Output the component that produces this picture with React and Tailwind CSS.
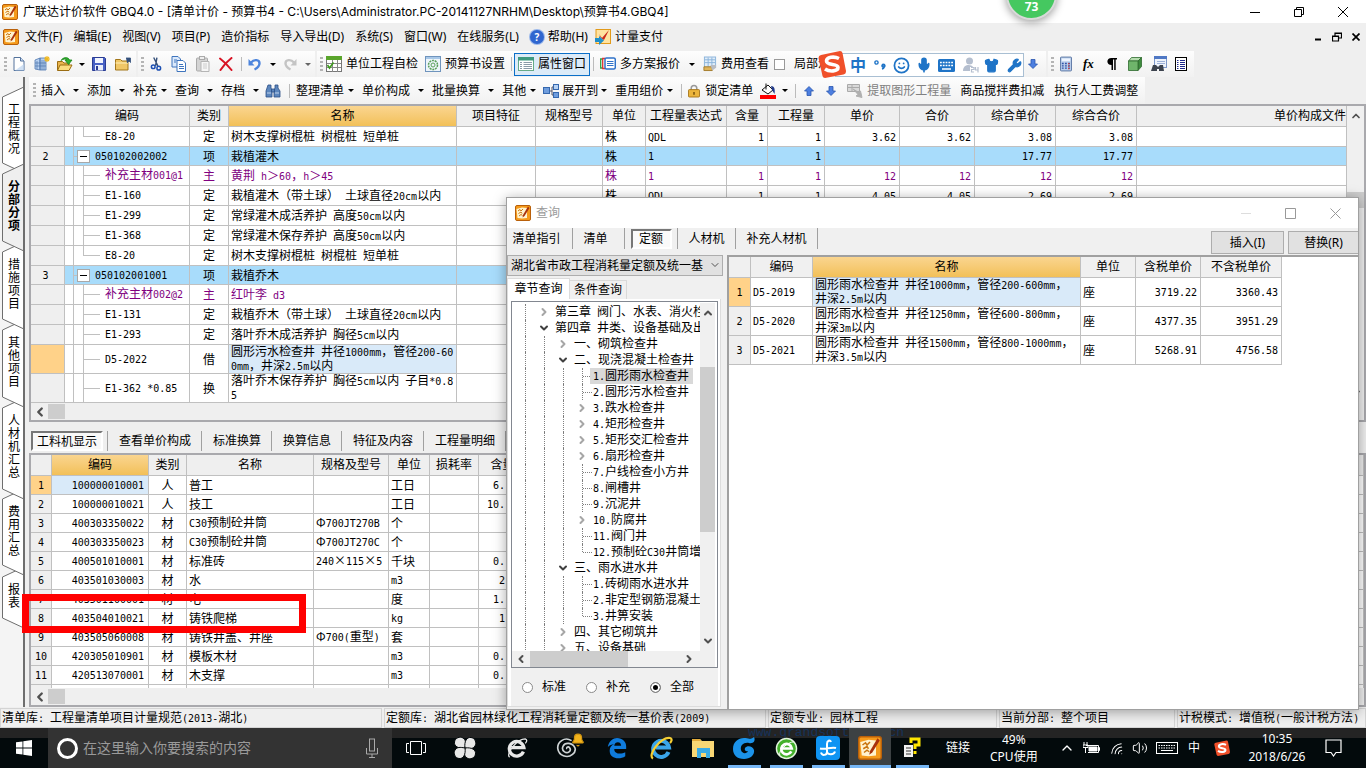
import React, { useState } from "react";
import clsx from "clsx";
import {
  Bell,
  ChevronDown,
  ChevronLeft,
  ChevronRight,
  ChevronUp,
  Mic,
  Minus,
  Shirt,
  Smile,
  Square,
  Volume2,
  Wifi,
  Wrench,
  X,
} from "lucide-react";

/* ---------- text helpers ---------- */

// Latin runs are set in a half-width face so that they line up with the CJK text
const Sun = ({ children }) =>
  String(children)
    .split(/([\x20-\x7e]+)/)
    .map((part, i) =>
      i % 2 ? (
        <span key={i} className="font-['DejaVu_Sans_Mono','Liberation_Mono',monospace] text-[10px]">
          {part}
        </span>
      ) : (
        part
      )
    );

/* ---------- icons ---------- */

const AppIcon = ({ className = "size-4" }) => (
  <svg viewBox="0 0 16 16" className={clsx("shrink-0", className)}>
    <rect x="0.500" y="0.500" width="15" height="15" rx="1.500" fill="#f59a1b" stroke="#b9600a" />
    <path d="M1.500 4L7 2.500l5 .5v10l-5 .5-4.500-.5z" fill="#fff3cf" />
    <path d="M3 6l2-1.500 1 1.500 2-2M3.500 8.500L6 7l1 1.500M4 11l2-1.500 1.500 1" stroke="#c9740f" strokeWidth="1" fill="none" />
    <path d="M13 1.500L8 10l-.5 2.500L9.500 11l5-8z" fill="#a8320d" />
  </svg>
);

const NewIcon = () => (
  <svg viewBox="0 0 14 16" className="h-4 w-3.5 shrink-0">
    <path d="M2 1.500h6.500L12 5v9.500H2z" fill="#fff" stroke="#54739c" />
    <path d="M8.500 1.500V5H12" fill="#cfe0f5" stroke="#54739c" />
    <path d="M3 14.500h9V8z" fill="#bcd3ee" opacity="0.700" />
  </svg>
);

const BuildingIcon = () => (
  <svg viewBox="0 0 16 16" className="size-4 shrink-0">
    <path d="M1 4l5-2v12l-5-1zM6 2h6v12H6z" fill="#b8d1f1" stroke="#4f77ae" strokeWidth="0.800" />
    <path d="M3 5v8M8 4v10M10 4v10M1 7h11M1 10h11" stroke="#4f77ae" strokeWidth="0.700" />
    <path d="M13 0v6M10 3h6M11 1l4 4M15 1l-4 4" stroke="#f0b81e" strokeWidth="1.100" />
  </svg>
);

const OpenIcon = () => (
  <svg viewBox="0 0 16 16" className="size-4 shrink-0">
    <path d="M0.500 14V5.500h5l1.500 1.500h5V14z" fill="#e9b44c" stroke="#9b6d13" />
    <path d="M0.500 14.500L3 9h12l-3 5.500z" fill="#fbdc7e" stroke="#9b6d13" />
    <path d="M4 4.500C6 1 11 .5 12.500 4H15l-3.500 4.500L8 4h2C9 2.500 6 3 4 4.500z" fill="#2fae2f" stroke="#198719" strokeWidth="0.800" />
  </svg>
);

const SaveIcon = () => (
  <svg viewBox="0 0 14 14" className="size-3.5 shrink-0">
    <path d="M0.500 0.500h12l1 1v12h-13z" fill="#4760c4" stroke="#2a3c94" />
    <rect x="3" y="1" width="8" height="5" fill="#f1f4fd" />
    <rect x="3" y="8" width="8" height="5.500" fill="#e9edf9" />
    <rect x="4" y="9" width="2" height="4" fill="#2a3c94" />
  </svg>
);

const FolderIcon = () => (
  <svg viewBox="0 0 16 14" className="h-3.5 w-4 shrink-0">
    <path d="M0.500 13V2.500h5L7 4h6v9z" fill="#f1c766" stroke="#a2761b" />
    <path d="M0.500 6h12.500" stroke="#fff0bb" />
    <path d="M11 1h4.500v4.500L14 4l-2 2" fill="#34507c" stroke="#34507c" strokeWidth="0.800" />
  </svg>
);

const CutIcon = () => (
  <svg viewBox="0 0 13 16" className="h-4 w-3 shrink-0" fill="none">
    <path d="M4 1l4.500 9M7.500 1L6 10" stroke="#36507a" strokeWidth="1.500" />
    <circle cx="3.500" cy="11" r="2" stroke="#1c4fb3" strokeWidth="1.600" />
    <circle cx="9.500" cy="12.500" r="2" stroke="#1c4fb3" strokeWidth="1.600" />
  </svg>
);

const CopyIcon = () => (
  <svg viewBox="0 0 16 16" className="size-4 shrink-0" strokeWidth="1">
    <path d="M1 0.500h6L9.500 3v8H1z" fill="#dbe9fb" stroke="#3e74bd" />
    <path d="M6 4.500h6L14.500 7v8.500H6z" fill="#fff" stroke="#3e74bd" />
    <path d="M8 8.500h4M8 10.500h5M8 12.500h5M3 4h3M3 6h2" stroke="#3e74bd" />
  </svg>
);

const PasteIcon = () => (
  <svg viewBox="0 0 16 16" className="size-4 shrink-0">
    <rect x="1.500" y="2" width="11" height="13" rx="1" fill="#d4d4d4" stroke="#aaa" />
    <rect x="4.500" y="0.500" width="5" height="3" fill="#eee" stroke="#aaa" />
    <path d="M6 5.500h8v10H6z" fill="#f6f6f6" stroke="#b5b5b5" />
    <path d="M8 8h4M8 10h4M8 12h4" stroke="#ccc" />
  </svg>
);

const DeleteIcon = () => (
  <svg viewBox="0 0 14 14" className="size-3.5 shrink-0" fill="none" stroke="#d81324" strokeLinecap="round">
    <path d="M1 1.500c4 3 8 7 11.500 11.500" strokeWidth="2" />
    <path d="M12.500 1C8 4.500 4 9 1.500 13" strokeWidth="2" />
  </svg>
);

const UndoIcon = ({ gray }) => (
  <svg viewBox="0 0 14 14" className={clsx("size-3.5 shrink-0", gray && "-scale-x-100")}>
    <path
      d="M3 5.500c3-3.500 8.500-3 8.500.8 0 3-2 4.700-5 6.200"
      fill="none"
      stroke={gray ? "#c4c4c4" : "#4c84dc"}
      strokeWidth="2.400"
    />
    <path d="M0.500 2v6.500h6z" fill={gray ? "#c4c4c4" : "#4c84dc"} />
  </svg>
);

const CheckTableIcon = () => (
  <svg viewBox="0 0 16 16" className="size-4 shrink-0">
    <rect x="0.500" y="0.500" width="15" height="15" fill="#fff" stroke="#777" />
    <rect x="0" y="0" width="16" height="4" fill="#5aa52c" />
    <path d="M1 7.500h14M1 11.500h14M6.500 4v12M11.500 4v12" stroke="#888" />
    <path d="M1.500 9l2 3 4-5.500" stroke="#3d9a1c" fill="none" strokeWidth="1.600" />
  </svg>
);

const GearWinIcon = () => (
  <svg viewBox="0 0 16 16" className="size-4 shrink-0">
    <rect x="0.500" y="0.500" width="15" height="15" fill="#eef5fb" stroke="#6f94bd" />
    <rect x="1" y="1" width="14" height="2" fill="#a9c8e8" />
    <circle cx="8" cy="9" r="4.500" fill="none" stroke="#5aa05a" strokeWidth="1.500" strokeDasharray="2 0.800" />
    <circle cx="8" cy="9" r="2" fill="none" stroke="#5aa05a" />
  </svg>
);

const ListWinIcon = () => (
  <svg viewBox="0 0 16 14" className="h-3.5 w-4 shrink-0">
    <rect x="0.500" y="0.500" width="15" height="13" fill="#fff" stroke="#6a8" />
    <rect x="0" y="0" width="16" height="3.500" fill="#3f9a80" />
    <path d="M2 5.500h2M2 7.500h2M2 9.500h2M2 11.500h2M5.500 5.500h8.500M5.500 7.500h8.500M5.500 9.500h8.500M5.500 11.500h8.500" stroke="#8a9aa8" />
  </svg>
);

const PlansIcon = () => (
  <svg viewBox="0 0 16 14" className="h-3.5 w-4 shrink-0" fill="#fff">
    <path d="M3 2H0.700v9H3" stroke="#2ea043" strokeWidth="1.300" />
    <path d="M5 1.500H2.700v10H5" stroke="#d33" strokeWidth="1.300" />
    <rect x="5" y="1" width="10.300" height="11" rx="1.500" stroke="#2f72c9" strokeWidth="1.500" />
    <path d="M7 4.500h6.500M7 6.500h6.500M7 8.500h6.500" stroke="#2f72c9" />
  </svg>
);

const FeeIcon = () => (
  <svg viewBox="0 0 15 16" className="h-4 w-3.5 shrink-0">
    <rect x="1.500" y="0.500" width="12" height="11" fill="#e0edf9" stroke="#8ab3da" />
    <path d="M2 3.500h11M2 6.500h11M5.500 1v10M9.500 1v10" stroke="#8ab3da" />
    <path d="M1 11h9v4H1z" fill="#e0b55b" stroke="#a37a28" />
    <path d="M8 9h6v3l-4 3z" fill="#b8bcc4" />
  </svg>
);

const BinocularsIcon = () => (
  <svg viewBox="0 0 16 14" className="h-3.5 w-4 shrink-0" fill="#5c86bd" stroke="#2c4f86" strokeWidth="0.800">
    <path d="M3 1h3v3l1 2v7H1V7zM10 1h3v3l2 3v6H9V6l1-2z" />
    <path d="M6.500 5h3v3h-3z" />
    <path d="M2 9h4M10 9h4" stroke="#dbe7f7" />
  </svg>
);

const ExpandIcon = () => (
  <svg viewBox="0 0 16 14" className="h-3.5 w-4 shrink-0">
    <path d="M6 7h3V3h2M9 7v4h2" fill="none" stroke="#556" />
    <rect x="0.500" y="3.500" width="6" height="6" fill="#6f9ddd" stroke="#3668ae" />
    <rect x="10.500" y="0.500" width="5" height="5" fill="#b8d2f3" stroke="#3668ae" />
    <rect x="10.500" y="8.500" width="5" height="5" fill="#6f9ddd" stroke="#3668ae" />
  </svg>
);

const LockIcon = () => (
  <svg viewBox="0 0 13 14" className="h-3.5 w-3 shrink-0">
    <path d="M3.500 7V4a3 3 0 016 0v3" fill="none" stroke="#999" strokeWidth="1.700" />
    <rect x="0.500" y="5.500" width="12" height="8" rx="1" fill="#ecb53c" stroke="#a4741a" />
    <path d="M6.500 8v3" stroke="#6b4708" strokeWidth="1.500" />
  </svg>
);

const BucketIcon = () => (
  <svg viewBox="0 0 16 16" className="size-4 shrink-0">
    <path d="M2 7l6-5 5 5-5 4z" fill="#fff" stroke="#111" />
    <path d="M6 0.500v6" stroke="#111" />
    <path d="M11 3c4 0 4 4 3.500 8L12 7z" fill="#223a8a" />
    <rect y="12" width="16" height="4" fill="#f00" />
  </svg>
);

const ArrowIcon = ({ down }) => (
  <svg viewBox="0 0 10 10" className={clsx("size-2.5 shrink-0", down && "rotate-180")}>
    <path d="M5 0.500L9.500 5H7v4.500H3V5H0.500z" fill="#4d7fe0" stroke="#2a55ae" strokeWidth="0.800" />
  </svg>
);

const ExtractIcon = () => (
  <svg viewBox="0 0 16 14" className="h-3.5 w-4 shrink-0">
    <path d="M0.500 0.500h12v7h-12z" fill="#d9d9d9" stroke="#aaa" />
    <path d="M1 3.500h11M5 1v6" stroke="#aaa" />
    <path d="M6 5l5 3 2.500-1 1.500 6.500-6-1.500 2-1.500z" fill="#b0b0b0" stroke="#b0b0b0" />
  </svg>
);

const CalcIcon = () => (
  <svg viewBox="0 0 13 16" className="h-4 w-3 shrink-0">
    <rect x="0.500" y="0.500" width="12" height="15" rx="1" fill="#b9cdea" stroke="#5873a1" />
    <rect x="2" y="2" width="9" height="3" fill="#eef5ff" />
    <path d="M2 7.500h9M2 10h9M2 12.500h9" stroke="#3254a8" strokeWidth="1.500" strokeDasharray="2 1.400" />
    <path d="M9.500 7v7" stroke="#d04040" strokeWidth="1.500" strokeDasharray="1.400 1.200" />
  </svg>
);

const CubeIcon = () => (
  <svg viewBox="0 0 14 14" className="size-3.5 shrink-0" stroke="#2e6b2e" strokeWidth="0.800">
    <path d="M0.500 4l3-3.500h10L10 4z" fill="#b5dcae" />
    <path d="M10 4l3.500-3.500v9L10 13.500z" fill="#3e8b3e" />
    <path d="M0.500 4H10v9.500H0.500z" fill="#6fb56b" />
  </svg>
);

const FindListIcon = () => (
  <svg viewBox="0 0 16 16" className="size-4 shrink-0">
    <rect x="3.500" y="0.500" width="12" height="11" fill="#eef3fb" stroke="#7d98c9" />
    <rect x="3" y="0" width="13" height="3" fill="#4f78c4" />
    <path d="M6 5.500h8M6 7.500h8" stroke="#9db1d8" />
    <path d="M2 9h3l2 2 2-2h3l1 6H8v-2H6v2H0z" fill="#3c434e" />
  </svg>
);

const DocIcon = () => (
  <svg viewBox="0 0 12 14" className="h-3.5 w-3 shrink-0">
    <rect x="0.500" y="0.500" width="11" height="13" fill="#fff" stroke="#000" />
    <path d="M2 3.500h1.500M2 5.500h1.500M2 7.500h1.500M2 9.500h1.500M2 11.500h1.500M5 3.500h5M5 5.500h5M5 7.500h5M5 9.500h5M5 11.500h5" stroke="#1f2a8c" />
  </svg>
);

const HelpIcon = () => (
  <span className="flex size-3.5 shrink-0 items-center justify-center rounded-full bg-[#2f66cf] text-[10px] leading-none font-bold text-white ring-1 ring-[#9bb8ea]">
    ?
  </span>
);

const PayIcon = () => (
  <svg viewBox="0 0 16 16" className="size-4 shrink-0">
    <rect x="1" y="0.500" width="14.500" height="14" fill="#ffe3a0" stroke="#e29a1a" />
    <path d="M4 5l3 4 7-8-5 10-3-2z" fill="#c8281c" />
    <path d="M0 9h4V7l5 4.500L4 16v-3H0z" fill="#1f8fc9" />
  </svg>
);

const SogouIcon = ({ className }) => (
  <svg viewBox="0 0 28 28" className={clsx("shrink-0", className)}>
    <path d="M3 5l19-4q2 0 2.500 2L28 21q0 3-2.500 3.500L7 28q-2 0-2.500-2L0.500 8Q0.500 5.500 3 5z" fill="#f0502a" />
    <path
      d="M21 8.500C16 6 8.500 7 8.500 11c0 5 11.500 2 11.500 6.500 0 4-8.500 4.500-13 1.500"
      fill="none"
      stroke="#fff"
      strokeWidth="3.600"
    />
  </svg>
);

/* ---------- toolbar parts ---------- */

const Caret = ({ gray }) => (
  <span
    className={clsx(
      "size-0 shrink-0 border-x-[3px] border-t-[3px] border-x-transparent",
      gray ? "border-t-[#666]" : "border-t-black"
    )}
  />
);

const Grip = () => (
  <span className="h-[15px] w-[3px] shrink-0 bg-[repeating-linear-gradient(#b4b4b4_0_2px,transparent_2px_4px)]" />
);

const Sep = ({ className }) => <span className={clsx("h-3.5 w-px shrink-0 bg-[#bbb]", className)} />;

const Tool = ({ className, children, label }) => (
  <button aria-label={label} className={clsx("flex shrink-0 items-center", className)}>
    {children}
  </button>
);

const bar = "flex h-full shrink-0 items-center bg-linear-to-b from-[#fdfdfd] to-[#f1f1f1]";

const menus = ["文件(F)", "编辑(E)", "视图(V)", "项目(P)", "造价指标", "导入导出(D)", "系统(S)", "窗口(W)", "在线服务(L)"];

const Header = () => (
  <header className="shrink-0 whitespace-pre">
    <div className="flex h-[23px] items-center bg-white pl-0.5">
      <AppIcon />
      <h1 className="ml-[5px] font-['Inter','Noto_Sans_CJK_SC',sans-serif] text-[12px]">
        广联达计价软件 GBQ4.0 - [清单计价 - 预算书4 - C:\Users\Administrator.PC-20141127NRHM\Desktop\预算书4.GBQ4]
      </h1>
      <div className="mr-[18px] ml-auto flex items-center gap-[34px]">
        <button aria-label="最小化">
          <svg viewBox="0 0 10 10" className="size-2.5" stroke="#000"><path d="M0 5.500h10" /></svg>
        </button>
        <button aria-label="还原">
          <svg viewBox="0 0 10 10" className="size-2.5" fill="none" stroke="#000">
            <path d="M0.500 2.500h7v7h-7zM2.500 2.500v-2h7v7h-2" />
          </svg>
        </button>
        <button aria-label="关闭">
          <svg viewBox="0 0 10 10" className="size-2.5" stroke="#000"><path d="M0 0l10 10M10 0L0 10" /></svg>
        </button>
      </div>
    </div>

    <nav className="flex h-[28px] items-center gap-[11px] pl-[3px]">
      <AppIcon className="-mr-[5px] size-4" />
      {menus.map((m) => (
        <button key={m}>{m}</button>
      ))}
      <button className="flex items-center gap-1"><HelpIcon />帮助(H)</button>
      <button className="-ml-1 flex items-center gap-1"><PayIcon />计量支付</button>
      <div className="mr-1.5 ml-auto flex items-center gap-2.5">
        <button aria-label="最小化子窗口">
          <svg viewBox="0 0 8 8" className="size-2" stroke="#000"><path d="M1 6.500h6" strokeWidth="2" /></svg>
        </button>
        <button aria-label="还原子窗口">
          <svg viewBox="0 0 10 10" className="size-2.5" fill="none" stroke="#000">
            <path d="M0.500 4h6v5h-6zM0.500 4.500h6M3 3.500V1h6.500v5H7M3 1.500h6.500" strokeWidth="1.200" />
          </svg>
        </button>
        <button aria-label="关闭子窗口">
          <svg viewBox="0 0 8 8" className="size-2" stroke="#000" strokeWidth="1.700"><path d="M0.500 0.500l7 7M7.500 0.500l-7 7" /></svg>
        </button>
      </div>
    </nav>

    <div className="flex h-[26px] gap-0.5">
      <div className={clsx(bar, "w-[136px] pl-1")}>
        <Grip />
        <Tool label="新建" className="ml-[5px]"><NewIcon /></Tool>
        <Tool label="新建工程" className="ml-2"><BuildingIcon /></Tool>
        <Tool label="打开" className="ml-[7px] gap-1.5"><OpenIcon /><Caret /></Tool>
        <Tool label="保存" className="ml-[7px]"><SaveIcon /></Tool>
        <Tool label="文件夹" className="ml-[9px]"><FolderIcon /></Tool>
      </div>
      <div className={clsx(bar, "w-[177px] pl-[3px]")}>
        <Grip />
        <Tool label="剪切" className="ml-1.5"><CutIcon /></Tool>
        <Tool label="复制" className="ml-[9px]"><CopyIcon /></Tool>
        <Tool label="粘贴" className="ml-2"><PasteIcon /></Tool>
        <Tool label="删除" className="ml-2"><DeleteIcon /></Tool>
        <Sep className="ml-2" />
        <Tool label="撤消" className="ml-1.5 gap-2"><UndoIcon /><Caret /></Tool>
        <Tool label="恢复" className="ml-[7px] gap-2"><UndoIcon gray /><Caret gray /></Tool>
      </div>
      <div className={clsx(bar, "flex-1 overflow-hidden pl-[3px] max-w-[729px]")}>
        <Grip />
        <Tool className="ml-[3px] gap-1"><CheckTableIcon />单位工程自检</Tool>
        <Tool className="ml-[7px] gap-1"><GearWinIcon />预算书设置</Tool>
        <Sep className="ml-1.5" />
        <Tool className="ml-0.5 h-[23px] w-[76px] gap-1 border border-[#0b6fc8] bg-[#dcebf8] pl-[3px]">
          <ListWinIcon />属性窗口
        </Tool>
        <Sep className="ml-[3px]" />
        <Tool className="ml-1.5 gap-1">
          <PlansIcon />多方案报价<span className="w-px" /><Caret />
        </Tool>
        <Tool className="ml-2 gap-1"><FeeIcon />费用查看</Tool>
        <label className="ml-[5px] flex shrink-0 items-center gap-[9px]">
          <input type="checkbox" className="size-[11px] appearance-none border border-[#999] bg-white" />
          局部汇总
        </label>
        <Tool label="下移" className="mr-2 ml-auto"><ArrowIcon down /></Tool>
      </div>
      <div className={clsx(bar, "w-[146px] pl-[3px]")}>
        <Grip />
        <Tool label="计算器" className="ml-1.5"><CalcIcon /></Tool>
        <Tool label="函数" className="ml-[11px] w-3 font-['Liberation_Serif',serif] text-[13px] font-bold italic">fx</Tool>
        <Tool label="段落" className="ml-3 w-2.5">
          <svg viewBox="0 0 10 12" className="h-3 w-2.5"><path d="M4.500 12V7C-1 7-1 0 4.500 0H10v1.500H8.700V12H7.200V1.500H6V12z" /></svg>
        </Tool>
        <Tool label="图形" className="ml-[11px]"><CubeIcon /></Tool>
        <Tool label="查找" className="ml-[9px]"><FindListIcon /></Tool>
        <Tool label="报表" className="ml-2"><DocIcon /></Tool>
      </div>
    </div>
  </header>
);

const drops = (list) =>
  list.map(([label, gap]) => (
    <Tool key={label} className={clsx("mr-2", gap)}>
      {label}
      <Caret />
    </Tool>
  ));

const Toolbar2 = () => (
  <div className="ml-1 flex h-[27px] w-fit shrink-0 items-center bg-linear-to-b from-[#fdfdfd] to-[#f1f1f1] pr-[7px] pl-1 whitespace-pre">
    <Grip />
    <span className="w-[5px]" />
    {drops([["插入", "gap-2"], ["添加", "gap-2"], ["补充", "gap-1"], ["查询", "gap-2"], ["存档", "gap-2"]])}
    <Tool label="查找" className="-ml-0.5"><BinocularsIcon /></Tool>
    <Sep className="mr-1.5 ml-2" />
    {drops([["整理清单", "gap-1"], ["单价构成", "gap-2"], ["批量换算", "gap-2"], ["其他", "gap-1"]])}
    <Tool className="mr-2 -ml-px gap-[3px]"><ExpandIcon />展开到<Caret /></Tool>
    {drops([["重用组价", "gap-1"]])}
    <Sep />
    <Tool className="ml-1.5 gap-[5px]"><LockIcon />锁定清单</Tool>
    <Tool label="填充色" className="ml-[7px] gap-1.5"><BucketIcon /><Caret /></Tool>
    <Sep className="ml-[7px]" />
    <Tool label="上移" className="ml-2"><ArrowIcon /></Tool>
    <Tool label="下移" className="ml-3"><ArrowIcon down /></Tool>
    <Tool className="ml-[11px] gap-1 text-[#808080]"><ExtractIcon />提取图形工程量</Tool>
    <Tool className="ml-[9px]">商品搅拌费扣减</Tool>
    <Tool className="ml-2.5">执行人工费调整</Tool>
  </div>
);

/* ---------- left tabs ---------- */

const sideTabs = [
  { label: "工程概况", h: 66, cls: "z-[7] h-[77px]" },
  { label: "分部分项", h: 67, cls: "z-[9] h-[78px] font-bold", active: true },
  { label: "措施项目", h: 67, cls: "z-[5] h-[78px]" },
  { label: "其他项目", h: 67, cls: "z-[4] h-[78px]" },
  { label: "人材机汇总", h: 81, cls: "z-[3] h-[91px]" },
  { label: "费用汇总", h: 66, cls: "z-[2] h-[78px]" },
  { label: "报表", h: 41, cls: "z-[1] h-[60px]" },
];

const SideTabs = () => (
  <aside className="isolate w-[25px] shrink-0 overflow-hidden border-r-2 border-[#6e6e6e] bg-[#f4f4f4] pt-[20px]">
    {sideTabs.map(({ label, h, cls, active }) => (
      <button key={label} className={clsx("relative block w-full pt-1.5 pl-2", cls)}>
        <svg
          className="absolute -top-[11px] left-0 -z-10"
          width="25"
          height={h + 22}
          fill={active ? "#efefef" : "#fff"}
          stroke="#6e6e6e"
        >
          <path d={`M25 0.500L2.500 11v${h}L25 ${h + 21.5}`} />
        </svg>
        <span className="block h-full w-3 text-[12px] leading-[13px] break-all">{label}</span>
      </button>
    ))}
  </aside>
);

/* ---------- upper grid ---------- */

const upperCols = [
  ["", "w-[34px]"],
  ["编码", "w-[125px]"],
  ["类别", "w-[39px]"],
  ["名称", "w-[228px]"],
  ["项目特征", "w-[79px]"],
  ["规格型号", "w-[67px]"],
  ["单位", "w-[43px]"],
  ["工程量表达式", "w-[81px]"],
  ["含量", "w-[41px]"],
  ["工程量", "w-[57px]"],
  ["单价", "w-[75px]"],
  ["合价", "w-[75px]"],
  ["综合单价", "w-[81px]"],
  ["综合合价", "w-[81px]"],
  ["单价构成文件", ""],
];

// [no, code, type, name, unit, expression, content, quantity, price, total, unit price, unit total]
const upperRows = [
  { kind: "last", c: ["", "E8-20", "定", "树木支撑树棍桩 树棍桩 短单桩", "株", "QDL", "1", "1", "3.62", "3.62", "3.08", "3.08"] },
  { kind: "head", c: ["2", "050102002002", "项", "栽植灌木", "株", "1", "", "1", "", "", "17.77", "17.77"] },
  { kind: "main", c: ["", "补充主材001@1", "主", "黄荆 h＞60，h＞45", "株", "1", "1", "1", "12", "12", "12", "12"] },
  { c: ["", "E1-160", "定", "栽植灌木（带土球） 土球直径20cm以内", "株", "QDL", "1", "1", "4.05", "4.05", "2.69", "2.69"] },
  { c: ["", "E1-299", "定", "常绿灌木成活养护 高度50cm以内"] },
  { c: ["", "E1-368", "定", "常绿灌木保存养护 高度50cm以内"] },
  { kind: "last", c: ["", "E8-20", "定", "树木支撑树棍桩 树棍桩 短单桩"] },
  { kind: "head", c: ["3", "050102001001", "项", "栽植乔木"] },
  { kind: "main", c: ["", "补充主材002@2", "主", "红叶李 d3"] },
  { c: ["", "E1-131", "定", "栽植乔木（带土球） 土球直径20cm以内"] },
  { c: ["", "E1-293", "定", "落叶乔木成活养护 胸径5cm以内"] },
  { tall: true, selected: true, c: ["", "D5-2022", "借", "圆形污水检查井 井径1000mm，管径200-60\n0mm，井深2.5m以内"] },
  { tall: true, c: ["", "E1-362 *0.85", "换", "落叶乔木保存养护 胸径5cm以内 子目*0.8\n5"] },
];

const cell = "border-r border-b border-[#c0c0c0] p-0";
const thBase = "border-r border-b border-[#c0c0c0] p-0 font-normal overflow-hidden";
const gold = "bg-linear-to-b from-[#fad58f] to-[#f2c057]";

const CodeCell = ({ kind, text }) => (
  <div className="flex h-full items-center">
    <span className="h-full w-[9px] shrink-0 border-r border-[#c0c0c0]" />
    {kind === "head" ? (
      <>
        <span className="h-px w-[3px] bg-[#c0c0c0]" />
        <span className="flex size-[13px] items-center justify-center border border-[#a8a8a8] bg-white">
          <span className="h-px w-[7px] bg-black" />
        </span>
        <span className="pl-[5px]"><Sun>{text}</Sun></span>
      </>
    ) : (
      <>
        <span className={clsx("w-2.5 shrink-0 border-r border-[#c0c0c0]", kind === "last" ? "h-1/2 self-start" : "h-full")} />
        <span className="h-px w-4 shrink-0 bg-[#c0c0c0]" />
        <span className="pl-[5px]"><Sun>{text}</Sun></span>
      </>
    )}
  </div>
);

const UpperGrid = () => (
  <section className="flex h-[318px] shrink-0 flex-col border-2 border-[#a9a9ad] bg-[#efefef]">
    <div className="flex min-h-0 flex-1">
      <div className="min-w-0 flex-1 overflow-hidden">
        <table className="w-full table-fixed border-separate border-spacing-0 whitespace-pre">
          <thead>
            <tr>
              {upperCols.map(([label, w], i) => (
                <th key={i} className={clsx(thBase, w, label === "名称" && gold)}>
                  <div className={clsx("flex h-[20px] items-center", i === 14 ? "justify-end" : "justify-center")}>
                    {label}
                  </div>
                </th>
              ))}
            </tr>
          </thead>
          <tbody>
            {upperRows.map(({ kind, tall, selected, c }, r) => {
              const cells = [...c.slice(0, 4), "", "", ...c.slice(4), ...Array(12 - c.length).fill(""), ""];
              return (
                <tr
                  key={r}
                  className={clsx(
                    kind === "head" ? "bg-[#a8dcfb]" : "bg-white",
                    kind === "main" && "text-[#800080]"
                  )}
                >
                  {cells.map((v, i) => (
                    <td
                      key={i}
                      className={clsx(
                        cell,
                        i === 0 && (selected ? "bg-[#ffd289]" : "bg-[#efefef]"),
                        i === 3 && selected && "bg-[#d9eaf9]"
                      )}
                    >
                      <div className={clsx(tall ? "h-[28px]" : kind === "head" ? "h-[18px]" : "h-[19px]")}>
                        {i === 1 ? (
                          <CodeCell kind={kind} text={v} />
                        ) : (
                          <div
                            className={clsx(
                              "flex h-full items-center leading-[13px]",
                              i === 0 && "justify-center pr-1",
                              i === 2 && "justify-center",
                              (i === 3 || i === 6 || i === 7) && "pl-0.5",
                              i > 7 && "justify-end pr-[3px]"
                            )}
                          >
                            <span><Sun>{v}</Sun></span>
                          </div>
                        )}
                      </div>
                    </td>
                  ))}
                </tr>
              );
            })}
          </tbody>
        </table>
      </div>
      <div className="flex w-[17px] flex-col items-center bg-[#f0f0f0] pt-1">
        <ChevronUp className="size-3 text-[#505050]" strokeWidth={3.5} />
        <span className="mt-[70px] h-4 w-full bg-[#cdcdcd]" />
        <ChevronDown className="mt-auto mb-1 size-3 text-[#505050]" strokeWidth={3.5} />
      </div>
    </div>
    <div className="flex h-[17px] items-center pl-0.5">
      <ChevronLeft className="size-3.5 text-[#505050]" strokeWidth={4} />
      <span className="ml-px h-[15px] w-[17px] bg-[#cdcdcd]" />
    </div>
  </section>
);

/* ---------- lower grid ---------- */

const lowerCols = [
  ["", "w-[21px]"],
  ["编码", "w-[97px]"],
  ["类别", "w-[38px]"],
  ["名称", "w-[127px]"],
  ["规格及型号", "w-[75px]"],
  ["单位", "w-[41px]"],
  ["损耗率", "w-[49px]"],
  ["含量", "w-[48px]"],
  ["", ""],
];

const lowerRows = [
  ["1", "100000010001", "人", "普工", "", "工日", "", "6."],
  ["2", "100000010021", "人", "技工", "", "工日", "", "10."],
  ["3", "400303350022", "材", "C30预制砼井筒", "Φ700JT270B", "个", "", ""],
  ["4", "400303350023", "材", "C30预制砼井筒", "Φ700JT270C", "个", "", ""],
  ["5", "400501010001", "材", "标准砖", "240×115×5", "千块", "", "0."],
  ["6", "403501030003", "材", "水", "", "m3", "", "2"],
  ["7", "403501100001", "材", "电", "", "度", "", "1."],
  ["8", "403504010021", "材", "铸铁爬梯", "", "kg", "", "1"],
  ["9", "403505060008", "材", "铸铁井盖、井座", "Φ700(重型)", "套", "", ""],
  ["10", "420305010901", "材", "模板木材", "", "m3", "", "0."],
  ["11", "420513070001", "材", "木支撑", "", "m3", "", "0."],
  ["", "", "", "", "", "", "", ""],
];

const LowerPanel = () => {
  const [tab, setTab] = useState("工料机显示");
  return (
    <>
      <div className="flex h-[31px] shrink-0 items-end pb-0.5 pl-0.5">
        {["工料机显示", "查看单价构成", "标准换算", "换算信息", "特征及内容", "工程量明细"].map((t) => (
          <React.Fragment key={t}>
            <button
              onClick={() => setTab(t)}
              className={clsx(
                "h-[20px] leading-[18px]",
                t === tab
                  ? "mr-1 border-2 border-[#fff] border-t-[#777] border-l-[#777] bg-[#f8f8f8] px-1"
                  : "pr-2.5 pl-[11px]"
              )}
            >
              {t}
            </button>
            <span className="h-[20px] w-px bg-[#a0a0a0]" />
          </React.Fragment>
        ))}
      </div>
      <section className="flex min-h-0 flex-1 flex-col border-2 border-[#a9a9ad] bg-[#efefef]">
        <div className="min-h-0 flex-1 overflow-hidden">
          <table className="w-full table-fixed border-separate border-spacing-0 whitespace-pre">
            <thead>
              <tr>
                {lowerCols.map(([label, w], i) => (
                  <th key={i} className={clsx(thBase, w, label === "编码" && gold)}>
                    <div className="flex h-[20px] items-center justify-center">{label}</div>
                  </th>
                ))}
              </tr>
            </thead>
            <tbody className="font-['Noto_Sans_CJK_SC',sans-serif]">
              {lowerRows.map((row, r) => (
                <tr key={r} className="bg-white">
                  {[...row, ""].map((v, i) => (
                    <td
                      key={i}
                      className={clsx(
                        cell,
                        i === 0 && (r === 0 ? "bg-[#ffd289]" : "bg-[#efefef]"),
                        i === 1 && r === 0 && "bg-[#d9eaf9]"
                      )}
                    >
                      <div
                        className={clsx(
                          "flex h-[18px] items-center",
                          (i === 0 || i === 2) && "justify-center",
                          i === 1 && "justify-end pr-1",
                          (i > 2 && i < 7) && "pl-0.5",
                          i === 7 && "justify-end pr-[21px]"
                        )}
                      >
                        <span><Sun>{v}</Sun></span>
                      </div>
                    </td>
                  ))}
                </tr>
              ))}
            </tbody>
          </table>
        </div>
        <div className="flex h-[17px] shrink-0 items-center pl-0.5">
          <ChevronLeft className="size-3.5 text-[#505050]" strokeWidth={4} />
          <span className="ml-px h-[15px] w-[17px] bg-[#cdcdcd]" />
        </div>
      </section>
    </>
  );
};

/* ---------- query dialog ---------- */

// [level, state, label]; state: open, closed, leaf, end
const tree = [
  [1, "closed", "第三章 阀门、水表、消火栓"],
  [1, "open", "第四章 井类、设备基础及出水口"],
  [2, "closed", "一、砌筑检查井"],
  [2, "open", "二、现浇混凝土检查井"],
  [3, "leaf", "1.圆形雨水检查井"],
  [3, "leaf", "2.圆形污水检查井"],
  [3, "closed", "3.跌水检查井"],
  [3, "closed", "4.矩形检查井"],
  [3, "closed", "5.矩形交汇检查井"],
  [3, "closed", "6.扇形检查井"],
  [3, "leaf", "7.户线检查小方井"],
  [3, "leaf", "8.闸槽井"],
  [3, "leaf", "9.沉泥井"],
  [3, "closed", "10.防腐井"],
  [3, "leaf", "11.阀门井"],
  [3, "end", "12.预制砼C30井筒增"],
  [2, "open", "三、雨水进水井"],
  [3, "leaf", "1.砖砌雨水进水井"],
  [3, "leaf", "2.非定型钢筋混凝土"],
  [3, "end", "3.井箅安装"],
  [2, "closed", "四、其它砌筑井"],
  [2, "closed", "五、设备基础"],
];

const TreeRow = ({ level, state, label, selected }) => (
  <li className="flex h-4 items-center">
    {Array.from({ length: level }).map((_, i) => (
      <span key={i} className="flex h-full w-[19px] shrink-0 pl-[9px]">
        <span className="h-full border-l border-dotted border-[#808080]" />
      </span>
    ))}
    <span className="flex h-full w-[19px] shrink-0 items-center justify-end">
      {state === "closed" && <ChevronRight className="mr-1 size-3 text-[#a6a6a6]" strokeWidth={4} />}
      {state === "open" && <ChevronDown className="mr-1 size-3 text-[#404040]" strokeWidth={4} />}
      {(state === "leaf" || state === "end") && (
        <>
          <span className={clsx("border-l border-dotted border-[#808080]", state === "end" ? "h-1/2 self-start" : "h-full")} />
          <span className="w-[9px] border-t border-dotted border-[#808080]" />
        </>
      )}
    </span>
    <span className={clsx("h-4 leading-4", selected ? "-ml-0.5 bg-[#d9d9d9] pr-1 pl-[3px]" : "pl-px")}>
      <Sun>{label}</Sun>
    </span>
  </li>
);

const quotaRows = [
  ["1", "D5-2019", "圆形雨水检查井 井径1000mm，管径200-600mm，\n井深2.5m以内", "座", "3719.22", "3360.43"],
  ["2", "D5-2020", "圆形雨水检查井 井径1250mm，管径600-800mm，\n井深3m以内", "座", "4377.35", "3951.29"],
  ["3", "D5-2021", "圆形雨水检查井 井径1500mm，管径800-1000mm，\n井深3.5m以内", "座", "5268.91", "4756.58"],
];

const quotaCols = [
  ["", "w-[22px]"],
  ["编码", "w-[62px]"],
  ["名称", "w-[268px]"],
  ["单位", "w-[55px]"],
  ["含税单价", "w-[65px]"],
  ["不含税单价", "w-[81px]"],
];

const queryTabs = [
  ["清单指引", "w-[66px] pr-1.5"],
  ["清单", "w-[52px] pr-1.5"],
  ["定额", "w-[53px]"],
  ["人材机", "w-[58px]"],
  ["补充人材机", "w-[82px]"],
];

const QueryDialog = () => {
  const [source, setSource] = useState("全部");
  return (
    <div
      role="dialog"
      aria-label="查询"
      className="absolute top-[197px] right-[7px] left-[506px] flex h-[513px] flex-col border border-[#a0a0a0] bg-[#f0f0f0] whitespace-pre shadow-[0_2px_12px_rgba(0,0,0,0.35)]"
    >
      <div className="flex h-[30px] shrink-0 items-center bg-white pl-2 text-[#9a9a9a]">
        <AppIcon />
        <span className="ml-[5px]">查询</span>
        <div className="mr-[17px] ml-auto flex items-center gap-[34px]">
          <svg viewBox="0 0 10 10" className="size-2.5" stroke="#ddd"><path d="M0 5.500h10" /></svg>
          <svg viewBox="0 0 11 11" className="size-[11px]" fill="none" stroke="#999"><path d="M0.500 0.500h10v10h-10z" /></svg>
          <svg viewBox="0 0 11 11" className="size-[11px]" stroke="#999"><path d="M0.500 0.500l10 10M10.500 0.500l-10 10" /></svg>
        </div>
      </div>

      <div className="flex h-[27px] shrink-0">
        {queryTabs.map(([t, w]) => (
          <div key={t} className={clsx("flex h-[21px] items-center justify-center border-r border-[#a0a0a0]", w)}>
            {t === "定额" ? (
              <button className="h-5 w-[41px] border-2 border-[#fff] border-t-[#777] border-l-[#777] bg-[#fafafa] leading-[16px]">{t}</button>
            ) : (
              <button>{t}</button>
            )}
          </div>
        ))}
        <div className="mt-[3px] ml-auto flex gap-1">
          <button className="h-[23px] w-[73px] border border-[#adadad] bg-[#e1e1e1] leading-[18px]">插入(I)</button>
          <button className="h-[23px] w-[70px] border border-r-0 border-[#adadad] bg-[#e1e1e1] leading-[18px]">替换(R)</button>
        </div>
      </div>

      <div className="flex min-h-0 flex-1">
        <div className="flex w-[216px] shrink-0 flex-col">
          <div className="relative mb-0.5 h-[21px] shrink-0">
            <select
              aria-label="定额库"
              className="h-full w-full appearance-none overflow-hidden border border-[#adadad] bg-[#e1e1e1] pr-4 pl-[3px] leading-[18px]"
            >
              <option>湖北省市政工程消耗量定额及统一基</option>
            </select>
            <ChevronDown className="pointer-events-none absolute top-1 right-0.5 size-3 text-[#505050]" />
          </div>
          <div className="flex h-[21px] shrink-0 items-end">
            <button className="h-[21px] w-[63px] border border-b-0 border-[#dcdcdc] bg-white leading-[18px]">章节查询</button>
            <button className="h-[19px] w-[57px] border border-b-0 border-l-0 border-[#d9d9d9] leading-[18px]">条件查询</button>
          </div>
          <div className="mr-0.5 mb-0.5 flex min-h-0 flex-1 flex-col border border-t-0 border-[#dcdcdc] bg-white pt-0.5 pr-0.5 pl-[3px]">
            <div className="flex min-h-0 flex-1 flex-col border border-[#828790] pr-0.5 pt-px">
              <div className="flex min-h-0 flex-1">
                <ul className="min-w-0 flex-1 overflow-hidden pt-px pl-1">
                  {tree.map(([level, state, label], i) => (
                    <TreeRow key={i} level={level} state={state} label={label} selected={i === 4} />
                  ))}
                </ul>
                <div className="flex w-[15px] shrink-0 flex-col items-center bg-[#f0f0f0]">
                  <ChevronUp className="mt-1 size-3 text-[#505050]" strokeWidth={4} />
                  <span className="mt-[48px] h-[165px] w-full bg-[#cdcdcd]" />
                  <ChevronDown className="mt-auto mb-1 size-3 text-[#505050]" strokeWidth={4} />
                </div>
              </div>
              <div className="flex h-4 shrink-0 items-center bg-[#f0f0f0] pr-[20px] pl-[3px]">
                <ChevronLeft className="size-3 text-[#505050]" strokeWidth={4} />
                <span className="ml-[3px] h-full w-[98px] bg-[#cdcdcd]" />
                <ChevronRight className="ml-auto size-3 text-[#505050]" strokeWidth={4} />
              </div>
            </div>
            <div className="flex h-[38px] shrink-0 items-center gap-5 bg-[#f0f0f0] pl-[11px]">
              {["标准", "补充", "全部"].map((s) => (
                <label key={s} className="flex items-center gap-[9px]">
                  <input
                    type="radio"
                    name="source"
                    checked={source === s}
                    onChange={() => setSource(s)}
                    className="size-[11px] appearance-none rounded-full border border-[#8a8a8a] bg-white checked:bg-black checked:ring-2 checked:ring-white checked:ring-inset"
                  />
                  {s}
                </label>
              ))}
            </div>
          </div>
        </div>

        <div className="ml-1 min-w-0 flex-1 overflow-hidden border-t-2 border-l-2 border-[#a0a0a0] bg-white">
          <table className="w-[553px] table-fixed border-separate border-spacing-0">
            <thead>
              <tr className="bg-[#f0f0f0]">
                {quotaCols.map(([label, w], i) => (
                  <th key={i} className={clsx(thBase, w, i === 2 && gold)}>
                    <div className="flex h-[20px] items-center justify-center">{label}</div>
                  </th>
                ))}
              </tr>
            </thead>
            <tbody>
              {quotaRows.map((row, r) => (
                <tr key={r}>
                  {row.map((v, i) => (
                    <td
                      key={i}
                      className={clsx(
                        cell,
                        i === 0 && (r === 0 ? "bg-[#ffd289]" : "bg-[#efefef]"),
                        i === 2 && r === 0 && "bg-[#d9eaf9]"
                      )}
                    >
                      <div
                        className={clsx(
                          "flex h-[28px] items-center leading-[13px]",
                          i === 0 && "justify-center",
                          i > 0 && i < 4 && "pl-0.5",
                          i > 3 && "justify-end pr-[3px]"
                        )}
                      >
                        <span><Sun>{v}</Sun></span>
                      </div>
                    </td>
                  ))}
                </tr>
              ))}
            </tbody>
          </table>
        </div>
      </div>
    </div>
  );
};

/* ---------- floating widgets ---------- */

const SogouBar = () => (
  <div className="absolute top-[53px] left-[835px] flex h-[24px] w-[189px] items-center border border-[#a9bfd3] bg-white pl-3.5 text-[#1f74c7]">
    <SogouIcon className="absolute -top-[4px] -left-[18px] size-7" />
    <span className="w-4 text-[16px] font-bold leading-none">中</span>
    <svg viewBox="0 0 12 10" className="ml-2 h-2.5 w-3" fill="none" stroke="currentColor">
      <circle cx="2.500" cy="2.500" r="1.600" strokeWidth="1.400" />
      <path d="M9.500 4.500a1.300 1.300 0 11-.1 0c2 1 .6 4-1.400 4.500" strokeWidth="1.800" />
    </svg>
    <Smile className="ml-[7px] size-[17px]" strokeWidth={2.5} />
    <Mic className="ml-1.5 size-4" strokeWidth={2.5} fill="currentColor" />
    <svg viewBox="0 0 17 13" className="ml-1.5 h-[13px] w-[17px]">
      <rect width="17" height="13" rx="1.500" fill="currentColor" />
      <path d="M2 3.500h13M2 6.500h13" stroke="#fff" strokeWidth="1.600" strokeDasharray="1.800 1" />
      <path d="M4 10h9" stroke="#fff" strokeWidth="1.500" />
    </svg>
    <svg viewBox="0 0 17 16" className="ml-2 h-4 w-[17px]" fill="#b5bfcf">
      <circle cx="6.500" cy="4" r="3.500" />
      <path d="M0 14c0-7 8-7 10-4H7v4z" />
      <path d="M8 10.500h3v2H8.500V15H11M12.500 10v3h3M15 10v5.500" fill="none" stroke="#b5bfcf" strokeWidth="1.200" />
    </svg>
    <Shirt className="ml-1 size-[15px]" strokeWidth={2} fill="currentColor" />
    <Wrench className="ml-2 size-[15px]" strokeWidth={2} fill="currentColor" />
  </div>
);

/* ---------- status + task bar ---------- */

const StatusBar = () => (
  <footer className="flex h-[21px] shrink-0 gap-0.5 pt-px leading-[18px] whitespace-pre">
    {[
      ["清单库: 工程量清单项目计量规范(2013-湖北)", "w-[382px]"],
      ["定额库: 湖北省园林绿化工程消耗量定额及统一基价表(2009)", "w-[382px]"],
      ["定额专业: 园林工程", "w-[229px]"],
      ["当前分部: 整个项目", "w-[176px]"],
      ["计税模式: 增值税(一般计税方法)", "flex-1"],
    ].map(([t, w]) => (
      <span key={t} className={clsx("overflow-hidden border border-[#d4d4d4] pl-px", w)}>
        <Sun>{t}</Sun>
      </span>
    ))}
  </footer>
);

const apps = [
  {
    name: "pinwheel",
    cls: "ml-[12px] w-[52px]",
    icon: (
      <svg viewBox="0 0 24 24" className="size-6" fill="#e8e8e8" stroke="#04090b" strokeWidth="1">
        <path d="M12 12C5 13 1 10 1.500 6S7 0 10 2s3 5 2 10z" />
        <path d="M12 12C11 5 14 1 18 1.500S24 7 22 10s-5 3-10 2z" />
        <path d="M12 12c7-1 11 2 10.500 6S17 24 14 22s-3-5-2-10z" />
        <path d="M12 12c1 7-2 11-6 10.500S0 17 2 14s5-3 10-2z" />
      </svg>
    ),
  },
  {
    name: "browser",
    cls: "w-[52px]",
    icon: (
      <svg viewBox="0 0 24 24" className="size-[22px]" fill="none" stroke="#e8e8e8">
        <path d="M19 16a8 8 0 11.5-4.500H6" strokeWidth="3.600" />
        <path d="M4 22C-1 19 12 2 21 2c3 1 1 4 0 5" strokeWidth="1.400" />
      </svg>
    ),
  },
  {
    name: "news",
    cls: "relative w-[51px] pr-1",
    icon: (
      <>
        <svg viewBox="0 0 24 24" className="size-[22px]" fill="none" stroke="#cfd4d6" strokeWidth="1.800">
          <path d="M17 4C9-1 1 6 2 13s10 11 16 6 2-11-4-12-9 6-5 9 8-1 6-4-4 0-3 1" />
        </svg>
        <Bell className="absolute top-[5px] right-[9px] size-3.5 text-[#d79a12]" fill="#f2b31d" />
      </>
    ),
  },
  {
    name: "edge",
    cls: "w-[45px]",
    icon: (
      <svg viewBox="0 0 24 24" className="size-[22px]" fill="#0f7bdc">
        <path d="M2 11C3 4 8 1 12 1c6 0 10 4 10 9v3H9c0 6 8 6 12 3.500V21c-6 4-17 3-17-6 0-4 2-6 5-7-3 0-5 1-7 3zm7-1.500h7.500c0-5-7-5-7.500 0z" />
      </svg>
    ),
  },
  {
    name: "ie",
    cls: "w-[43px]",
    icon: (
      <svg viewBox="0 0 24 24" className="size-6" fill="none">
        <path d="M19.500 16a8 8 0 11.5-4.500H7" stroke="#3aa5ea" strokeWidth="4" />
        <path d="M4 22.500C-2 19 12 1 21 2c3 1 1 4 0 5" stroke="#f6cf35" strokeWidth="2.200" />
      </svg>
    ),
  },
  {
    name: "explorer",
    cls: "w-[41px]",
    icon: (
      <svg viewBox="0 0 22 20" className="h-5 w-[22px]">
        <path d="M0 1h8l2 2h12v16H0z" fill="#f8d775" />
        <path d="M0 1h8l1 2H0z" fill="#e3ab3b" />
        <path d="M5 10h13v10h-4v-5H9v5H5z" fill="#3aabe6" />
      </svg>
    ),
  },
  {
    name: "g",
    cls: "w-[42px]",
    run: "w-[33px]",
    icon: (
      <svg viewBox="0 0 24 24" className="size-6">
        <path
          d="M22 1c2 4-1 7-5 6-5-1-9 2-8 7 1 4 6 4 7 1-2 1-4-1-3-3 2-3 8-2 9 2 1 5-4 9-10 9C5 23 1 19 1 13 1 6 6 2 12 2c4 0 7 2 10-1z"
          fill="#1b93ea"
        />
      </svg>
    ),
  },
  {
    name: "360",
    cls: "w-[42px]",
    run: "w-[33px]",
    icon: (
      <svg viewBox="0 0 24 24" className="size-[23px]" fill="none">
        <circle cx="12" cy="12" r="10.500" fill="#42b02a" stroke="#e2f4dd" strokeWidth="1.500" />
        <path d="M17 15a5.500 5.500 0 11.500-3H8" stroke="#fff" strokeWidth="2.800" />
        <path d="M5 19c-2-4 8-14 15-14" stroke="#fff" />
      </svg>
    ),
  },
  {
    name: "pay",
    cls: "w-[42px]",
    run: "w-[33px]",
    icon: (
      <svg viewBox="0 0 24 24" className="size-6" fill="none">
        <rect width="24" height="24" rx="4" fill="#0f94f3" />
        <path d="M15 6c-1-2.500-4-1.500-4 2v8c0 3.500-5 4-6 .5M4 12.500c5 1.500 11-2 16-.5M11 16c1 3 7 3 8-.5" stroke="#fff" strokeWidth="2" />
      </svg>
    ),
  },
  { name: "gbq", cls: "w-[42px] bg-[#3c4143]", run: "w-[41px]", icon: <AppIcon className="size-6" /> },
  {
    name: "help",
    cls: "w-[42px]",
    run: "w-[33px]",
    icon: (
      <svg viewBox="0 0 22 22" className="size-[22px]">
        <path d="M3 8h9v12H3z" fill="#f2f2f2" />
        <path d="M5 11h5M5 14h5M5 17h5" stroke="#333" />
        <path d="M10 6V2h8v6h-4v4M14 14v3" fill="none" stroke="#ffe600" strokeWidth="3" />
      </svg>
    ),
  },
];

const TaskBar = () => (
  <div className="relative flex h-10 shrink-0 bg-[#030a0c] text-white">
    <div className="absolute inset-x-0 top-0 h-2.5 overflow-hidden bg-[#242424] pl-[748px] font-['Liberation_Mono',monospace] text-[13px] leading-[10px] text-[#16335a]">
      www.grandsoft.com.cn
    </div>
    <button aria-label="开始" className="relative flex w-12 items-center justify-center">
      <svg viewBox="0 0 16 16" className="size-4" fill="#fff">
        <path d="M0 2.300l6.500-.9v6.100H0zM7.300 1.300L16 0v7.500H7.300zM0 8.500h6.500v6.100L0 13.700zM7.300 8.500H16V16l-8.700-1.300z" />
      </svg>
    </button>
    <div className="relative flex w-[344px] items-center bg-[#333] pl-[9px]">
      <span className="size-[21px] rounded-full border-[3px] border-white" />
      <input
        aria-label="搜索"
        placeholder="在这里输入你要搜索的内容"
        className="ml-[5px] w-[270px] bg-transparent text-[14px] placeholder:text-[#9a9a9a]"
      />
      <svg viewBox="0 0 12 20" className="mr-3.5 ml-auto h-5 w-3" fill="none" stroke="#aaa">
        <rect x="3.500" y="1" width="5" height="12" />
        <path d="M0.500 10v6h11v-6M6 16v3M3 19.500h6" />
      </svg>
    </div>
    <button aria-label="任务视图" className="relative ml-[13px] flex w-[22px] items-center justify-center">
      <svg viewBox="0 0 20 16" className="h-4 w-5" fill="none" stroke="#fff">
        <path d="M4.500 1.500h11v13h-11zM3 3.500H0.500v9H3M17 3.500h2.500v9H17" />
      </svg>
    </button>
    {apps.map(({ name, cls, icon, run }) => (
      <button key={name} aria-label={name} className={clsx("relative flex items-center justify-center", cls)}>
        {icon}
        {run && <span className={clsx("absolute bottom-0 h-[3px] bg-[#76b6f5]", run)} />}
      </button>
    ))}
    <div className="relative ml-[13px] flex flex-1 items-center text-[12px]">
      <span>链接</span>
      <div className="ml-5 text-center leading-[17px]">49%<br />CPU使用</div>
      <div className="mr-2 ml-auto flex items-center">
        <ChevronUp className="size-4" strokeWidth={2} />
        <svg viewBox="0 0 17 12" className="ml-2 h-3 w-[17px]" fill="none" stroke="#fff">
          <path d="M3 3.500h12.500v7H5M15.500 5.500h1v3h-1" />
          <path d="M6 5h8v4H6z" fill="#fff" />
          <path d="M1 0v3M4 0v3M0 3h5v2.500H0zM2.500 5v6" />
        </svg>
        <Wifi className="mt-1 ml-2.5 size-4 -rotate-45" strokeWidth={1.5} />
        <Volume2 className="ml-1.5 size-4" strokeWidth={1.5} />
        <svg viewBox="0 0 22 12" className="ml-2 h-3 w-[22px]" fill="none" stroke="#fff">
          <rect x="0.500" y="0.500" width="21" height="11" />
          <path d="M2.500 3.500h17M2.500 6h17" strokeDasharray="1.500 1" />
          <path d="M5 8.500h12" />
        </svg>
        <span className="ml-2.5">中</span>
        <SogouIcon className="ml-3.5 size-4" />
        <div className="ml-4 w-[62px] text-center leading-[18px]">10:35<br />2018/6/26</div>
        <svg viewBox="0 0 17 18" className="ml-[17px] h-[18px] w-[17px]" fill="none" stroke="#fff" strokeWidth="1.200">
          <path d="M1 1h15v12.500h-5L8.500 17 6 13.500H1z" />
        </svg>
        <span className="ml-4" />
      </div>
    </div>
  </div>
);

const App = () => (
  <div className="relative flex h-screen min-h-[768px] flex-col overflow-hidden bg-[#efefef] font-['Noto_Sans','Noto_Sans_CJK_SC',sans-serif] text-[12px] leading-[18px] text-black">
    <Header />
    <div className="flex min-h-0 flex-1">
      <SideTabs />
      <main className="flex min-w-0 flex-1 flex-col">
        <Toolbar2 />
        <div className="flex min-h-0 flex-1 flex-col pl-1">
          <UpperGrid />
          <LowerPanel />
        </div>
      </main>
    </div>
    <StatusBar />
    <TaskBar />

    <QueryDialog />
    <SogouBar />
    <div className="absolute -top-[31px] left-[1006px] flex size-[51px] items-end justify-center rounded-full border-2 border-[#d9d9d9] bg-[#45c860] pb-0.5 text-[12px] font-bold text-white shadow-[0_2px_8px_rgba(0,0,0,0.4)]">
      73
    </div>
    <div className="absolute top-[594px] left-[22px] h-[39px] w-[284px] border-[7px] border-[#f00]" />
  </div>
);

export default App;
